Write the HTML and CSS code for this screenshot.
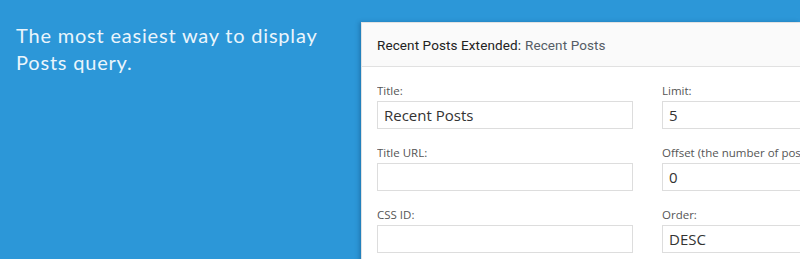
FILE: index.html
```html
<!DOCTYPE html>
<html lang="en">
<head>
    <meta charset="UTF-8">
    <meta name="viewport" content="width=device-width, initial-scale=1.0">
    <title>Recent Posts Extended</title>
    <link rel="stylesheet" href="styles.css">
</head>
<body>
    <div class="intro">
        <p>The most easiest way to display<br>Posts query.</p>
    </div>

    <div class="widget">
        <div class="widget-header">
            <span class="widget-name">Recent Posts Extended:</span>
            <span class="widget-title">Recent Posts</span>
        </div>
        <div class="widget-body">
            <div class="field">
                <label>Title:</label>
                <input type="text" value="Recent Posts">
            </div>
            <div class="field">
                <label>Limit:</label>
                <input type="text" value="5">
            </div>
            <div class="field">
                <label>Title URL:</label>
                <input type="text" value="">
            </div>
            <div class="field">
                <label>Offset (the number of posts to skip):</label>
                <input type="text" value="0">
            </div>
            <div class="field">
                <label>CSS ID:</label>
                <input type="text" value="">
            </div>
            <div class="field">
                <label>Order:</label>
                <input type="text" value="DESC">
            </div>
        </div>
    </div>
</body>
</html>
```

FILE: styles.css
```css
body {
    background-color: #2c97d8;
    margin: 0;
    padding: 0;
    display: flex;
    flex-direction: row;
    align-items: flex-start;
    height: 100vh;
    overflow: hidden;
}

.intro {
    flex: none;
    width: 361px;
    padding: 22px 0 0 16px;
    box-sizing: border-box;
}

.intro p {
    margin: 0;
    color: #eaf5fc;
    font-family: Lato, "Open Sans", sans-serif;
    font-size: 20px;
    letter-spacing: 0.8px;
    line-height: 27px;
}

.widget {
    flex: 1;
    min-width: 0;
    overflow: hidden;
    margin-top: 22px;
    background-color: #fff;
    border: 1px solid #e2e2e2;
    border-right: none;
    box-shadow: -2px 0 4px rgba(0, 40, 80, 0.25);
}

.widget-header {
    height: 43px;
    padding: 0 15px;
    display: flex;
    align-items: center;
    gap: 4px;
    background-color: #fafafa;
    border-bottom: 1px solid #e1e1e1;
    font-family: Roboto, "Open Sans", sans-serif;
    font-size: 13.5px;
    letter-spacing: 0.1px;
}

.widget-name {
    color: #222;
}

.widget-title {
    color: #555d66;
}

.widget-body {
    padding: 16px 0 20px 15px;
    display: grid;
    grid-template-columns: 256px 256px;
    column-gap: 29px;
    row-gap: 16px;
}

.field {
    min-width: 0;
}

.field label {
    display: block;
    margin-bottom: 2px;
    color: #555;
    font-family: "Open Sans", sans-serif;
    font-size: 11.5px;
    line-height: 16px;
    white-space: nowrap;
    overflow: hidden;
}

.field input {
    display: block;
    width: 100%;
    height: 28px;
    box-sizing: border-box;
    padding: 0 6px;
    border: 1px solid #ddd;
    border-radius: 0;
    background-color: #fff;
    color: #333;
    font-family: "Open Sans", sans-serif;
    font-size: 15px;
    outline: none;
}
```
